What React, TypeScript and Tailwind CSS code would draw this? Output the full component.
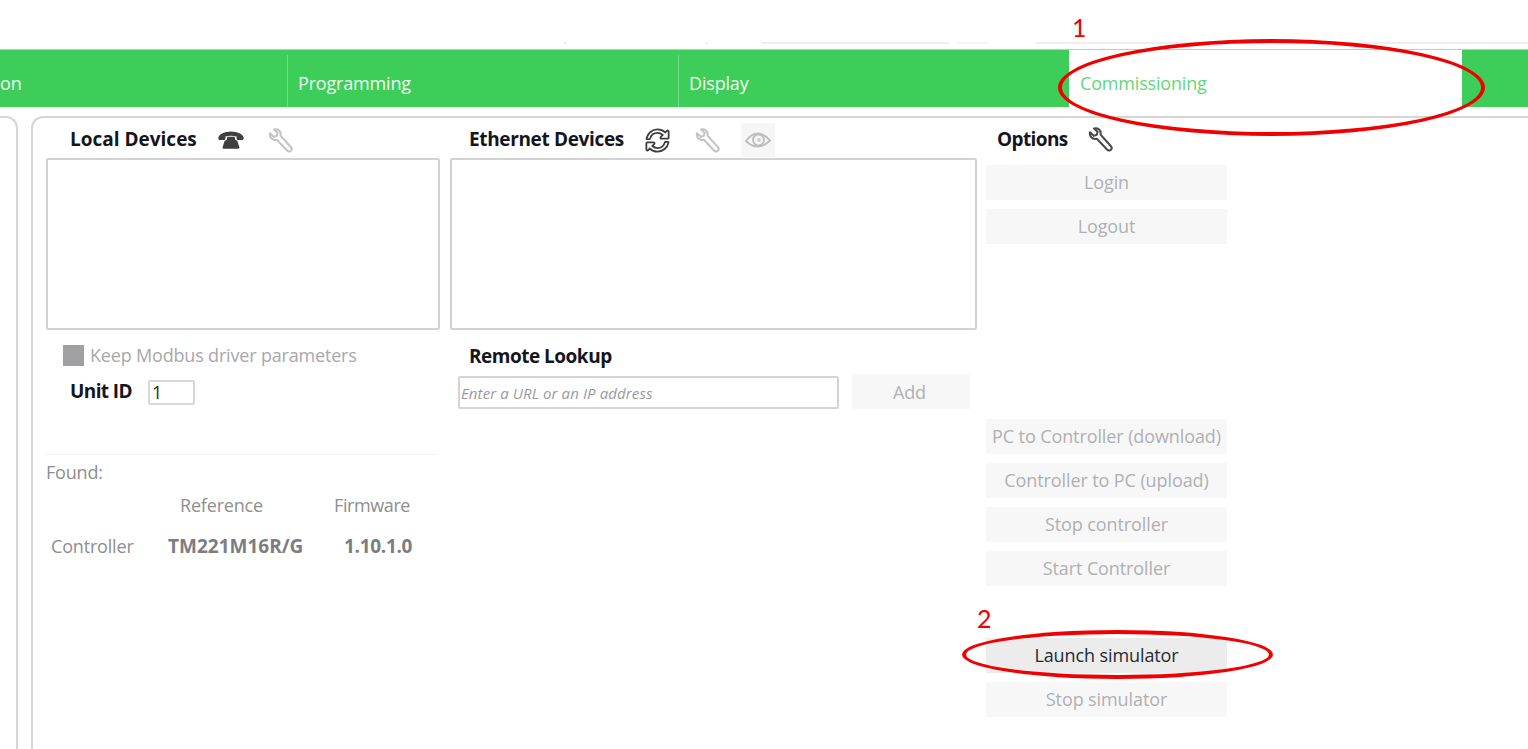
import React from "react";
import { FaSyncAlt } from "react-icons/fa";

function WrenchIcon({ color }: { color: string }) {
  return (
    <svg width="26" height="26" viewBox="0 0 28 28" fill="none" stroke={color} strokeWidth="2.2" strokeLinejoin="round" strokeLinecap="round">
      <path d="M3.2 5.6 7.4 9.6 10.6 8.4 11.4 5 7.600 1.600C11.4.4 15.4 3 14.6 8.2L25.6 20.4C27 22 26.8 23.6 25.8 24.6 24.6 25.8 22.8 25.6 21.6 24.2L10.6 12.6C6 14 2.2 10.4 3.2 5.6Z" />
    </svg>
  );
}

function PhoneIcon() {
  return (
    <svg width="26" height="18" viewBox="0 0 26 18" fill="#3f3f3f">
      <path d="M.3 7.4C.1 3.6 6.2.6 13 .6s12.900 3 12.700 6.800c0 .9-.8 1.500-1.600 1.500h-4c-.9 0-1.500-.7-1.500-1.500V5.600C17 5 15 4.800 13 4.800S9 5 7.400 5.600v1.800c0 .8-.6 1.500-1.500 1.500h-4C1.100 8.900.3 8.300.3 7.400Z" />
      <path d="M9.400 5.800h7.200l.6 2.400c0 .8 1 1.300 2 1.300l2.200 6.800c.2.900-.3 1.500-1.200 1.500H5.800c-.9 0-1.400-.6-1.200-1.500l2.200-6.800c1 0 2-.5 2-1.300Z" />
    </svg>
  );
}

function EyeIcon() {
  return (
    <svg width="26" height="18" viewBox="0 0 26 18" fill="none" stroke="#bdbdbd" strokeWidth="1.800">
      <path d="M1 10C5.500 4 9 2.500 13 2.500S20.500 4 25 9.500C20.500 14 17 15.500 13 15.500S5.500 14.500 1 10Z" />
      <circle cx="13.500" cy="9" r="5.500" />
      <circle cx="14" cy="9" r="2" fill="#d0d0d0" stroke="none" />
    </svg>
  );
}

function ActionButton({ label, active }: { label: string; active?: boolean }) {
  return (
    <div className={active
      ? "w-[241px] h-[35px] flex items-center justify-center bg-[#ececec] text-[#262a33] text-[18px] tracking-[-0.1px]"
      : "w-[241px] h-[35px] flex items-center justify-center bg-[#f7f7f7] text-[#b0b0b3] text-[18px] tracking-[-0.1px]"}>
      {label}
    </div>
  );
}

export default function App() {
  return (
    <div className="relative w-[1528px] h-[749px] overflow-hidden bg-white font-['Open_Sans',sans-serif] tracking-[-0.18px]">
      <div className="h-[49px] flex items-end pb-[5px]">
        <div className="ml-[564px] w-[3px] h-[2px] bg-[#eeeeee]" />
        <div className="ml-[139px] w-[2px] h-[2px] bg-[#eeeeee]" />
        <div className="ml-[53px] w-[188px] h-[2px] bg-[#eeeeee]" />
        <div className="ml-[9px] w-[30px] h-[2px] bg-[#f4f4f4]" />
        <div className="ml-[48px] flex-1 h-[2px] bg-[#eeeeee]" />
      </div>

      <div className="h-[58px] flex bg-[#3dce5a] border-t border-[#c8c8c8] text-[18px] text-[#f2fff2]">
        <div className="w-[287px] flex items-center pt-[9px]">on</div>
        <div className="w-[391px] mt-[5px] border-l border-[#74dc88] flex items-center pl-[10px] pt-[4px]">Programming</div>
        <div className="w-[391px] mt-[5px] border-l border-[#74dc88] flex items-center pl-[10px] pt-[4px]">Display</div>
        <div className="w-[393px] bg-white flex items-center pl-[11px] pt-[10px] text-[#5fd878]">Commissioning</div>
      </div>

      <div className="mt-[9px] flex h-[634px]">
        <div className="w-[18px] h-full border-t-2 border-r-2 border-[#d6d6d6] rounded-tr-xl" />
        <div className="ml-[13px] flex-1 border-t-2 border-l-2 border-[#d6d6d6] rounded-tl-xl pl-[13px] flex gap-[9px]">
          <section className="w-[395px]">
            <div className="h-[40px] flex items-center pl-[24px] pt-[4px]">
              <h2 className="w-[148px] -mt-[2px] text-[19px] font-bold tracking-[0px] text-[#14161c]">Local Devices</h2>
              <PhoneIcon />
              <span className="ml-[23px] mt-[1px]"><WrenchIcon color="#c4c4c4" /></span>
            </div>
            <div className="w-[394px] h-[172px] border-2 border-[#d2d2d2] rounded-[2px]" />
            <div className="mt-[14px] ml-[17px] flex items-center gap-[6px] text-[#a8a8ab] text-[18px] h-[22px]">
              <div className="w-[21px] h-[21px] bg-[#a0a0a2]" />
              <span>Keep Modbus driver parameters</span>
            </div>
            <div className="mt-[14px] ml-[24px] flex items-center h-[25px] text-[18px]">
              <span className="w-[78px] -mt-[2px] text-[19px] font-bold tracking-[-0.6px] text-[#14161c]">Unit ID</span>
              <div className="w-[47px] h-[25px] border-2 border-[#d8d8d8] rounded-[2px] text-[#2c2c2c] pl-[2px] flex items-center">1</div>
            </div>
            <div className="mt-[49px] border-t border-[#f0f0f0] w-[391px] pt-[4px] text-[#8e8e8e] text-[18px]">
              <div>Found:</div>
              <div className="mt-[6px] flex">
                <span className="ml-[134px] w-[154px]">Reference</span>
                <span className="tracking-[-0.4px]">Firmware</span>
              </div>
              <div className="mt-[13px] flex items-center">
                <span className="ml-[5px] w-[117px]">Controller</span>
                <span className="w-[176px] text-[19px] font-bold tracking-[0px] text-[#7d7d80]">TM221M16R/G</span>
                <span className="text-[19px] font-bold tracking-[-0.3px] text-[#7d7d80]">1.10.1.0</span>
              </div>
            </div>
          </section>

          <section className="w-[527px]">
            <div className="h-[40px] flex items-center pl-[19px] pt-[4px]">
              <h2 className="w-[177px] -mt-[2px] text-[19px] font-bold tracking-[-0.35px] text-[#14161c] whitespace-nowrap">Ethernet Devices</h2>
              <FaSyncAlt size={23} className="fill-white stroke-[#3c3c3c] [stroke-width:40px] overflow-visible" />
              <span className="ml-[25px] mt-[1px]"><WrenchIcon color="#c4c4c4" /></span>
              <div className="ml-[21px] w-[34px] h-[34px] bg-[#f6f6f6] flex items-center justify-center">
                <EyeIcon />
              </div>
            </div>
            <div className="h-[172px] border-2 border-[#d2d2d2] rounded-[2px]" />
            <h2 className="mt-[14px] ml-[19px] h-[24px] leading-[24px] text-[19px] font-bold tracking-[-0.5px] text-[#14161c]">Remote Lookup</h2>
            <div className="mt-[8px] ml-[8px] flex">
              <div className="w-[381px] h-[33px] border-2 border-[#d4d4d4] rounded-[2px] flex items-center pl-[1px] pt-[1px] text-[15px] italic text-[#9a9a9e] tracking-[0.1px]">Enter a URL or an IP address</div>
              <div className="ml-[13px] -mt-[2px] w-[118px] h-[35px] flex items-center justify-center pt-[1px] pr-[3px] bg-[#f7f7f7] text-[#b0b0b3] text-[18px]">Add</div>
            </div>
          </section>

          <section className="w-[241px]">
            <div className="h-[40px] flex items-center pl-[11px] pt-[4px]">
              <h2 className="w-[90px] -mt-[2px] text-[19px] font-bold tracking-[-0.6px] text-[#14161c]">Options</h2>
              <WrenchIcon color="#4a4a4a" />
            </div>
            <div className="mt-[7px] flex flex-col gap-[9px]">
              <ActionButton label="Login" />
              <ActionButton label="Logout" />
            </div>
            <div className="mt-[175px] flex flex-col gap-[9px]">
              <ActionButton label="PC to Controller (download)" />
              <ActionButton label="Controller to PC (upload)" />
              <ActionButton label="Stop controller" />
              <ActionButton label="Start Controller" />
            </div>
            <div className="mt-[52px] flex flex-col gap-[9px]">
              <ActionButton label="Launch simulator" active />
              <ActionButton label="Stop simulator" />
            </div>
          </section>
        </div>
      </div>

      <span className="absolute left-[1072px] top-[12px] text-[25px] leading-[30px] text-[#f00000] font-['Lato',sans-serif]">1</span>
      <span className="absolute left-[977px] top-[603px] text-[25px] leading-[30px] text-[#f00000] font-['Lato',sans-serif]">2</span>
      <div className="absolute left-[1058px] top-[39px] w-[427px] h-[97px] rounded-[50%] border-[4px] border-[#f00000]" />
      <div className="absolute left-[962px] top-[630px] w-[311px] h-[49px] rounded-[50%] border-[4px] border-[#f00000]" />
    </div>
  );
}
